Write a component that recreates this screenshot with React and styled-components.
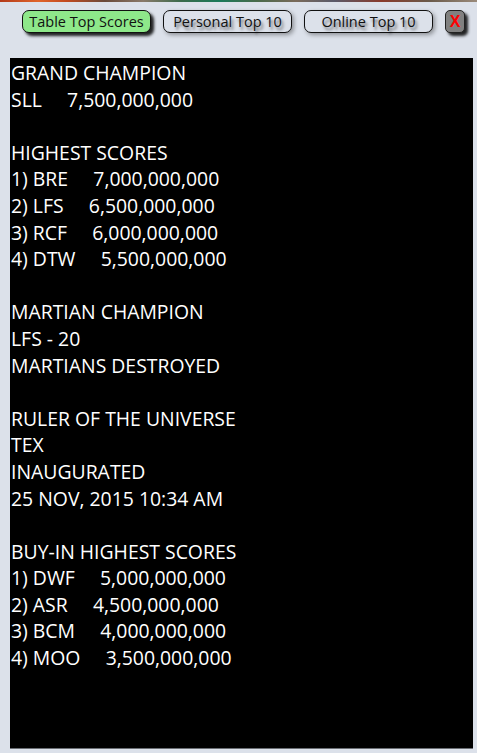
import React from "react";
import styled, { createGlobalStyle } from "styled-components";

const GlobalStyle = createGlobalStyle`
  html, body {
    margin: 0;
    padding: 0;
    background: #dce1ea;
    font-family: "Open Sans", "Noto Sans", sans-serif;
  }
`;

const sections = [
  ["GRAND CHAMPION", "SLL     7,500,000,000"],
  [
    "HIGHEST SCORES",
    "1) BRE     7,000,000,000",
    "2) LFS     6,500,000,000",
    "3) RCF     6,000,000,000",
    "4) DTW     5,500,000,000",
  ],
  ["MARTIAN CHAMPION", "LFS - 20", "MARTIANS DESTROYED"],
  ["RULER OF THE UNIVERSE", "TEX", "INAUGURATED", "25 NOV, 2015 10:34 AM"],
  [
    "BUY-IN HIGHEST SCORES",
    "1) DWF     5,000,000,000",
    "2) ASR     4,500,000,000",
    "3) BCM     4,000,000,000",
    "4) MOO     3,500,000,000",
  ],
];

export default function App() {
  return (
    <Page>
      <GlobalStyle />
      <Strip />
      <Toolbar>
        <TabButton active>Table Top Scores</TabButton>
        <TabButton>Personal Top 10</TabButton>
        <TabButton>Online Top 10</TabButton>
        <CloseButton>X</CloseButton>
      </Toolbar>
      <Board>
        {sections.map((lines, i) => (
          <Section key={i}>
            {lines.map((line) => (
              <Line key={line}>{line}</Line>
            ))}
          </Section>
        ))}
      </Board>
    </Page>
  );
}

const Page = styled.div`
  width: 477px;
  height: 753px;
  overflow: hidden;
`;

const Strip = styled.div`
  height: 2px;
  background: linear-gradient(
    90deg,
    #b33a1a 0%,
    #e0642a 8%,
    #c24a20 14%,
    #6a4a3a 22%,
    #8a7a6a 30%,
    #3a6a4a 38%,
    #1a7a5a 46%,
    #4a6a4a 54%,
    #7a6a5a 62%,
    #5a5a6a 70%,
    #8a3a2a 80%,
    #6a5a4a 90%,
    #9a8a7a 100%
  );
`;

const Toolbar = styled.div`
  display: flex;
  align-items: center;
  gap: 12px;
  padding: 8px 0 0 22px;
  height: 23px;
`;

const TabButton = styled.button`
  height: 23px;
  width: 129px;
  padding: 0;
  border: 1px solid #111;
  border-radius: 7px;
  background: ${(p) => (p.active ? "#8ee88a" : "#dce1ea")};
  color: #111;
  font-family: "Open Sans", "Noto Sans", sans-serif;
  font-size: 14.5px;
  line-height: 21px;
  box-shadow: ${(p) =>
    p.active ? "3px 3px 3px rgba(0,0,0,0.85)" : "2px 2px 4px rgba(0,0,0,0.35)"};
  text-shadow: ${(p) => (p.active ? "none" : "2px 3px 3px rgba(0,0,0,0.55)")};
  cursor: pointer;
`;

const CloseButton = styled.button`
  height: 23px;
  width: 20px;
  padding: 0;
  border: 1px solid #222;
  border-radius: 5px;
  background: #808080;
  color: #ff0000;
  font-family: "Liberation Sans", Arial, sans-serif;
  font-weight: bold;
  font-size: 16px;
  line-height: 21px;
  box-shadow: 3px 3px 3px rgba(0, 0, 0, 0.85);
  cursor: pointer;
`;

const Board = styled.div`
  margin: 25px 0 0 10px;
  width: 463px;
  height: 691px;
  box-sizing: border-box;
  background: #000;
  border-bottom: 1px solid #6a6e74;
  padding: 2px 0 0 1px;
  display: flex;
  flex-direction: column;
  gap: 26.6px;
`;

const Section = styled.div`
  display: flex;
  flex-direction: column;
`;

const Line = styled.div`
  color: #fff;
  font-size: 19.4px;
  line-height: 26.6px;
  white-space: pre;
`;
